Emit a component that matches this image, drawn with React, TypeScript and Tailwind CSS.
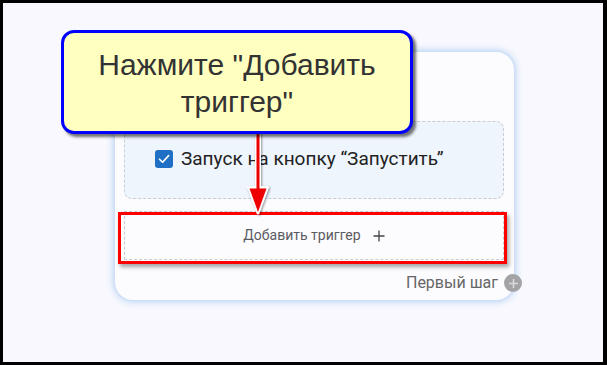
import React from "react";

export default function App() {
  return (
    <div className="w-[607px] h-[365px] overflow-hidden bg-black">
      <div
        className="relative ml-[3px] mt-[3px] w-[600px] h-[359px] bg-[#f8f8fe]"
        style={{ fontFamily: "Roboto, 'Liberation Sans', sans-serif" }}
      >
        {/* Card */}
        <div className="absolute left-[112px] top-[49px] w-[399px] h-[248px] rounded-[18px] bg-[#fcfcff] shadow-[0_0_6px_2px_#b8d3f2] pl-[9px] pr-[10px] pt-[69px] flex flex-col">
          <div className="h-[78px] rounded-[8px] border border-dashed border-[#c9ccd2] bg-[#eef5fd] pl-[30px] pt-[27px]">
            <div className="flex items-center gap-[8px]">
              <div className="w-[18px] h-[18px] rounded-[3px] bg-[#1f6fc5] flex items-center justify-center">
                <svg width="14" height="14" viewBox="0 0 14 14">
                  <path d="M2.5 7.2 L5.6 10.3 L11.6 3.6" stroke="white" strokeWidth="1.6" fill="none" strokeLinecap="round" strokeLinejoin="round" />
                </svg>
              </div>
              <span className="text-[19px] text-[#222] leading-none">Запуск на кнопку “Запустить”</span>
            </div>
          </div>
          <div className="mt-[12px] h-[49px] border border-dashed border-[#c9ccd2] flex items-center justify-center gap-[12px] bg-[#fcfcff]">
            <span className="text-[14px] text-[#5b5b5f]">Добавить триггер</span>
            <svg width="12" height="12" viewBox="0 0 12 12">
              <path d="M6 0.5 V11.5 M0.5 6 H11.5" stroke="#444" strokeWidth="1.3" />
            </svg>
          </div>
          <div className="mt-[11px] flex items-center justify-end mr-[-18px] gap-[6px]">
            <span className="text-[16px] text-[#666]">Первый шаг</span>
            <div className="w-[18px] h-[18px] rounded-full bg-[#a3a3a6] flex items-center justify-center">
              <svg width="11" height="11" viewBox="0 0 11 11">
                <path d="M5.5 1 V10 M1 5.5 H10" stroke="#d9d9dc" strokeWidth="1.6" />
              </svg>
            </div>
          </div>
        </div>

        {/* Red highlight */}
        <div className="absolute left-[115px] top-[209px] w-[389px] h-[52px] border-[3px] border-[#ff0000] shadow-[2px_3px_4px_rgba(0,0,0,0.35)]" />

        {/* Arrow */}
        <svg className="absolute left-[241px] top-[127px]" width="30" height="88" viewBox="0 0 30 88">
          <g style={{ filter: "drop-shadow(1px 1px 1px rgba(0,0,0,0.4))" }}>
            <path d="M14 3 V62" stroke="white" strokeWidth="6" strokeLinecap="round" />
            <path d="M4.5 57.5 L23.5 57.5 L14 83 Z" fill="white" stroke="white" strokeWidth="3" strokeLinejoin="round" />
            <path d="M14 3 V62" stroke="#ee0000" strokeWidth="3" strokeLinecap="round" />
            <path d="M5.5 58.5 L22.5 58.5 L14 82 Z" fill="#ee0000" />
          </g>
        </svg>

        {/* Callout */}
        <div
          className="absolute left-[58px] top-[27px] w-[352px] h-[104px] rounded-[13px] border-[3px] border-[#0000ff] bg-[#ffffc0] shadow-[3px_3px_3px_rgba(0,0,0,0.55)] flex items-center justify-center text-center pt-[2px]"
          style={{ fontFamily: "'Liberation Sans', Arial, sans-serif" }}
        >
          <div className="text-[30px] leading-[37px] text-[#333]">
            Нажмите "Добавить
            <br />
            триггер"
          </div>
        </div>
      </div>
    </div>
  );
}
